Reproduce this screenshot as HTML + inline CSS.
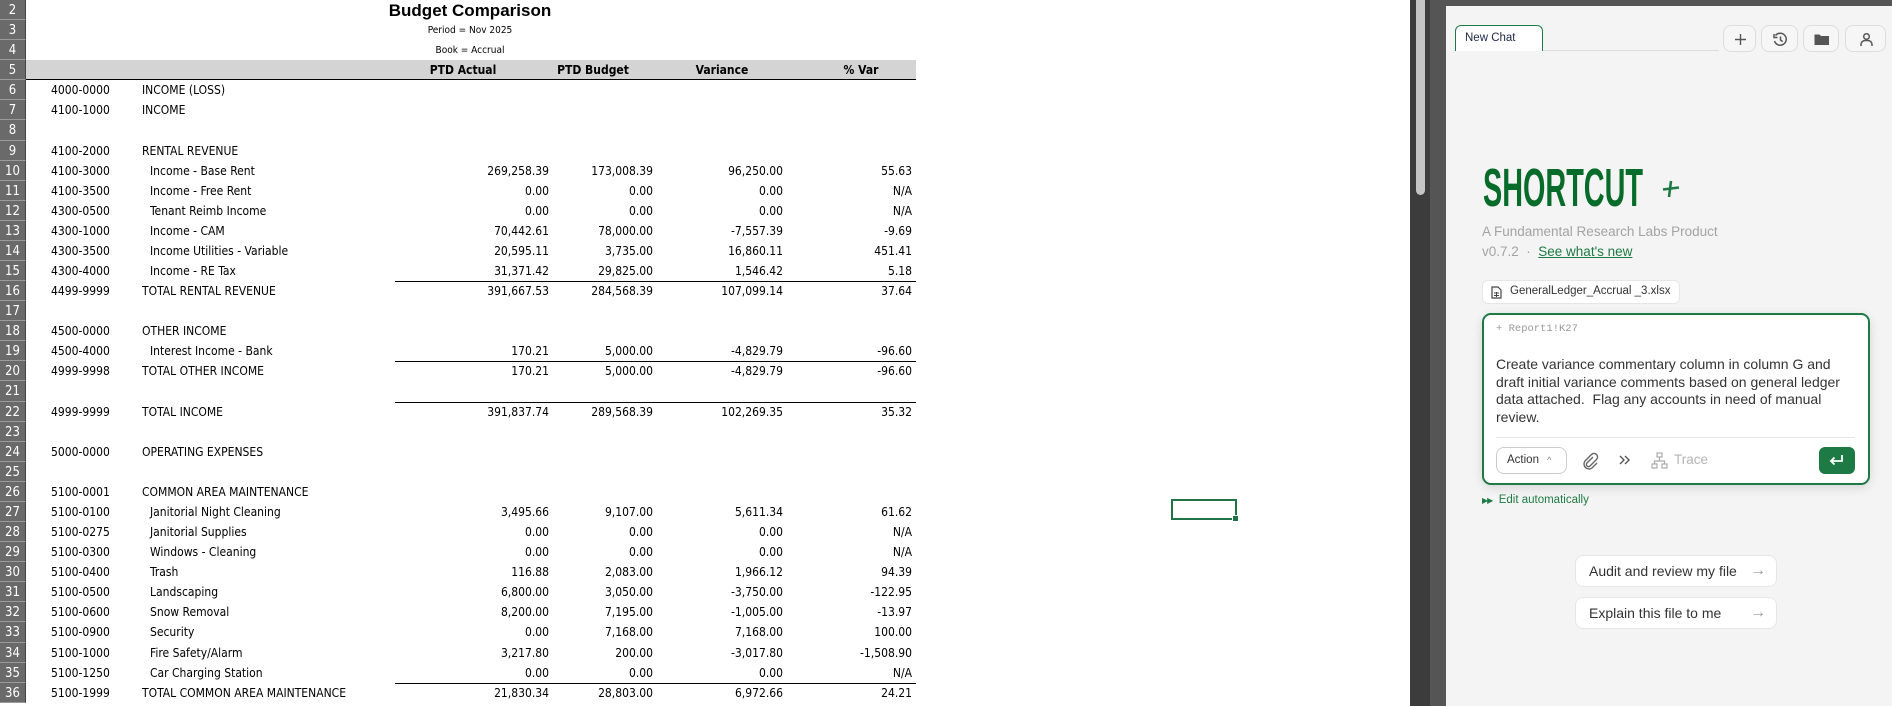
<!DOCTYPE html>
<html><head><meta charset="utf-8"><style>
*{margin:0;padding:0;box-sizing:border-box}
body{width:1892px;height:706px;overflow:hidden;background:#fff;font-family:"Liberation Sans",sans-serif;position:relative}
#sheet{position:absolute;left:0;top:0;width:1410px;height:706px;background:#fff;font-family:"DejaVu Sans Condensed","Liberation Sans",sans-serif;font-size:12px;color:#000}
.r{position:relative;height:20.08px;line-height:21px}
.r span{position:absolute;top:0;white-space:nowrap}
.h{left:0;width:26px;height:20.08px;background:#6a6a6a;color:#fff;text-align:center;font-size:13px;border-bottom:1px solid #9a9a9a;border-right:1px solid #444}
.c{left:51px}.n{left:142px}.ni{left:150px}
.a{left:449px;width:100px;text-align:right}
.b{left:553px;width:100px;text-align:right}
.v{left:683px;width:100px;text-align:right}
.p{left:812px;width:100px;text-align:right}
.tl::after{content:"";position:absolute;left:395px;width:521px;top:0;border-top:1px solid #000}
.ctr{left:300px;width:340px;text-align:center}
#sel{position:absolute;left:1171px;top:499px;width:66px;height:21px;border:2px solid #217346}
#sel::after{content:"";position:absolute;right:-4px;bottom:-4px;width:5px;height:5px;background:#217346;border:1px solid #fff}
#sb1{position:absolute;left:1410px;top:0;width:20px;height:706px;background:#3c3c3c}
#thumb{position:absolute;left:1416px;top:0;width:9px;height:195px;background:#c4c4c4;border-radius:0 0 5px 5px}
#sb2{position:absolute;left:1430px;top:0;width:16px;height:706px;background:#555}
#panel{position:absolute;left:1446px;top:0;width:446px;height:706px;background:#f4f4f4;border-top:6px solid #555}
.ab{position:absolute}
.btn{position:absolute;top:25px;height:27px;border:1px solid #ddd;border-radius:8px;background:#f6f6f6}
.sug{position:absolute;left:1575px;width:202px;height:32px;background:#fff;border:1px solid #e6e6e6;border-radius:8px;font-size:14px;color:#333;line-height:30px;padding-left:13px}
.sug i{position:absolute;right:10px;top:0;font-style:normal;color:#999;font-size:16px}
</style></head><body>
<div id="sheet">
<div class="r"><span class="h">2</span><span class="ctr" style="font-weight:bold;font-size:17px;font-family:'Liberation Sans',sans-serif">Budget Comparison</span></div>
<div class="r"><span class="h">3</span><span class="ctr" style="font-size:10px">Period = Nov 2025</span></div>
<div class="r"><span class="h">4</span><span class="ctr" style="font-size:10px">Book = Accrual</span></div>
<div class="r"><span class="h">5</span><span style="left:26px;width:890px;height:20.08px;background:#d4d4d4;border-bottom:1.5px solid #000"></span><span style="left:413px;width:100px;text-align:center;font-weight:bold">PTD Actual</span><span style="left:543px;width:100px;text-align:center;font-weight:bold">PTD Budget</span><span style="left:672px;width:100px;text-align:center;font-weight:bold">Variance</span><span style="left:811px;width:100px;text-align:center;font-weight:bold">% Var</span></div>
<div class="r"><span class="h">6</span><span class="c">4000-0000</span><span class="n">INCOME (LOSS)</span></div>
<div class="r"><span class="h">7</span><span class="c">4100-1000</span><span class="n">INCOME</span></div>
<div class="r"><span class="h">8</span></div>
<div class="r"><span class="h">9</span><span class="c">4100-2000</span><span class="n">RENTAL REVENUE</span></div>
<div class="r"><span class="h">10</span><span class="c">4100-3000</span><span class="ni">Income - Base Rent</span><span class="a">269,258.39</span><span class="b">173,008.39</span><span class="v">96,250.00</span><span class="p">55.63</span></div>
<div class="r"><span class="h">11</span><span class="c">4100-3500</span><span class="ni">Income - Free Rent</span><span class="a">0.00</span><span class="b">0.00</span><span class="v">0.00</span><span class="p">N/A</span></div>
<div class="r"><span class="h">12</span><span class="c">4300-0500</span><span class="ni">Tenant Reimb Income</span><span class="a">0.00</span><span class="b">0.00</span><span class="v">0.00</span><span class="p">N/A</span></div>
<div class="r"><span class="h">13</span><span class="c">4300-1000</span><span class="ni">Income - CAM</span><span class="a">70,442.61</span><span class="b">78,000.00</span><span class="v">-7,557.39</span><span class="p">-9.69</span></div>
<div class="r"><span class="h">14</span><span class="c">4300-3500</span><span class="ni">Income Utilities - Variable</span><span class="a">20,595.11</span><span class="b">3,735.00</span><span class="v">16,860.11</span><span class="p">451.41</span></div>
<div class="r"><span class="h">15</span><span class="c">4300-4000</span><span class="ni">Income - RE Tax</span><span class="a">31,371.42</span><span class="b">29,825.00</span><span class="v">1,546.42</span><span class="p">5.18</span></div>
<div class="r tl"><span class="h">16</span><span class="c">4499-9999</span><span class="n">TOTAL RENTAL REVENUE</span><span class="a">391,667.53</span><span class="b">284,568.39</span><span class="v">107,099.14</span><span class="p">37.64</span></div>
<div class="r"><span class="h">17</span></div>
<div class="r"><span class="h">18</span><span class="c">4500-0000</span><span class="n">OTHER INCOME</span></div>
<div class="r"><span class="h">19</span><span class="c">4500-4000</span><span class="ni">Interest Income - Bank</span><span class="a">170.21</span><span class="b">5,000.00</span><span class="v">-4,829.79</span><span class="p">-96.60</span></div>
<div class="r tl"><span class="h">20</span><span class="c">4999-9998</span><span class="n">TOTAL OTHER INCOME</span><span class="a">170.21</span><span class="b">5,000.00</span><span class="v">-4,829.79</span><span class="p">-96.60</span></div>
<div class="r"><span class="h">21</span></div>
<div class="r tl"><span class="h">22</span><span class="c">4999-9999</span><span class="n">TOTAL INCOME</span><span class="a">391,837.74</span><span class="b">289,568.39</span><span class="v">102,269.35</span><span class="p">35.32</span></div>
<div class="r"><span class="h">23</span></div>
<div class="r"><span class="h">24</span><span class="c">5000-0000</span><span class="n">OPERATING EXPENSES</span></div>
<div class="r"><span class="h">25</span></div>
<div class="r"><span class="h">26</span><span class="c">5100-0001</span><span class="n">COMMON AREA MAINTENANCE</span></div>
<div class="r"><span class="h">27</span><span class="c">5100-0100</span><span class="ni">Janitorial Night Cleaning</span><span class="a">3,495.66</span><span class="b">9,107.00</span><span class="v">5,611.34</span><span class="p">61.62</span></div>
<div class="r"><span class="h">28</span><span class="c">5100-0275</span><span class="ni">Janitorial Supplies</span><span class="a">0.00</span><span class="b">0.00</span><span class="v">0.00</span><span class="p">N/A</span></div>
<div class="r"><span class="h">29</span><span class="c">5100-0300</span><span class="ni">Windows - Cleaning</span><span class="a">0.00</span><span class="b">0.00</span><span class="v">0.00</span><span class="p">N/A</span></div>
<div class="r"><span class="h">30</span><span class="c">5100-0400</span><span class="ni">Trash</span><span class="a">116.88</span><span class="b">2,083.00</span><span class="v">1,966.12</span><span class="p">94.39</span></div>
<div class="r"><span class="h">31</span><span class="c">5100-0500</span><span class="ni">Landscaping</span><span class="a">6,800.00</span><span class="b">3,050.00</span><span class="v">-3,750.00</span><span class="p">-122.95</span></div>
<div class="r"><span class="h">32</span><span class="c">5100-0600</span><span class="ni">Snow Removal</span><span class="a">8,200.00</span><span class="b">7,195.00</span><span class="v">-1,005.00</span><span class="p">-13.97</span></div>
<div class="r"><span class="h">33</span><span class="c">5100-0900</span><span class="ni">Security</span><span class="a">0.00</span><span class="b">7,168.00</span><span class="v">7,168.00</span><span class="p">100.00</span></div>
<div class="r"><span class="h">34</span><span class="c">5100-1000</span><span class="ni">Fire Safety/Alarm</span><span class="a">3,217.80</span><span class="b">200.00</span><span class="v">-3,017.80</span><span class="p">-1,508.90</span></div>
<div class="r"><span class="h">35</span><span class="c">5100-1250</span><span class="ni">Car Charging Station</span><span class="a">0.00</span><span class="b">0.00</span><span class="v">0.00</span><span class="p">N/A</span></div>
<div class="r tl"><span class="h">36</span><span class="c">5100-1999</span><span class="n">TOTAL COMMON AREA MAINTENANCE</span><span class="a">21,830.34</span><span class="b">28,803.00</span><span class="v">6,972.66</span><span class="p">24.21</span></div>
<div id="sel"></div>
</div>
<div id="sb1"></div><div id="thumb"></div><div id="sb2"></div>
<div id="panel"></div>
<!-- tab -->
<div class="ab" style="left:1455px;top:25px;width:88px;height:26px;border:1.5px solid #1e7a45;border-bottom:none;border-radius:6px 6px 0 0;background:#fff;font-size:11.5px;color:#1f2a44;padding:6px 0 0 9px">New Chat</div>
<div class="ab" style="left:1543px;top:50px;width:176px;height:1px;background:#ddd"></div>
<div class="btn" style="left:1723px;width:33px"><svg width="33" height="27"><path d="M16.5 8v11M11 13.5h11" stroke="#555" stroke-width="1.4"/></svg></div>
<div class="btn" style="left:1761px;width:37px"><svg width="37" height="27"><path d="M13.5 9.5A6 6 0 1 1 12.5 15" fill="none" stroke="#555" stroke-width="1.5"/><path d="M12 8v3.5h3.5" fill="none" stroke="#555" stroke-width="1.5"/><path d="M18.5 10.5v3.5l2.2 1.6" fill="none" stroke="#555" stroke-width="1.5"/></svg></div>
<div class="btn" style="left:1803px;width:36px"><svg width="36" height="27"><path d="M10.5 8.5h5l1.5 1.5h8v9h-14.5z" fill="#555"/></svg></div>
<div class="btn" style="left:1845px;width:41px"><svg width="41" height="27"><circle cx="20.5" cy="10.5" r="2.8" fill="none" stroke="#555" stroke-width="1.5"/><path d="M15 20v-1.5a4 4 0 0 1 4-4h3a4 4 0 0 1 4 4V20" fill="none" stroke="#555" stroke-width="1.5"/></svg></div>
<!-- logo -->
<div class="ab" style="left:1483px;top:164px;font-family:'Liberation Sans',sans-serif;font-weight:bold;font-size:45px;color:#076b2a;transform:scale(0.64,1.2);transform-origin:left top;line-height:40px;white-space:nowrap">SHORTCUT</div>
<svg class="ab" style="left:1660px;top:178px" width="22" height="22"><path d="M11 3L9 19M3 11.5L19 9.5" stroke="#1e7a45" stroke-width="2.6"/></svg>
<div class="ab" style="left:1482px;top:224px;font-size:13.5px;color:#a3a3a3">A Fundamental Research Labs Product</div>
<div class="ab" style="left:1482px;top:244px;font-size:13.5px;color:#a3a3a3">v0.7.2 &nbsp;·&nbsp; <span style="color:#1e7a45;text-decoration:underline">See what's new</span></div>
<div class="ab" style="left:1482px;top:280px;width:198px;height:24px;background:#fff;border:1px solid #e6e6e6;border-radius:6px;font-size:11.5px;color:#333;padding:4px 0 0 27px">GeneralLedger_Accrual _3.xlsx</div>
<svg class="ab" style="left:1491px;top:286px" width="11" height="13"><path d="M1 1h6l3 3v8H1z" fill="none" stroke="#444" stroke-width="1.2"/><path d="M3 7h5M3 9.5h5M5.5 6v5" stroke="#444"/></svg>
<!-- input -->
<div class="ab" style="left:1482px;top:313px;width:388px;height:172px;background:#fff;border:2px solid #1e7a45;border-radius:9px;box-shadow:0 3px 10px rgba(0,0,0,.12)"></div>
<div class="ab" style="left:1496px;top:323px;font-family:'Liberation Mono',monospace;font-size:10.5px;color:#999">+ Report1!K27</div>
<div class="ab" style="left:1496px;top:356px;width:362px;font-size:14px;line-height:17.7px;color:#333">Create variance commentary column in column G and draft initial variance comments based on general ledger data attached.&nbsp; Flag any accounts in need of manual review.</div>
<div class="ab" style="left:1496px;top:437px;width:359px;height:1px;background:#e6e6e6"></div>
<div class="ab" style="left:1496px;top:447px;width:71px;height:27px;border:1px solid #ccc;border-radius:8px;font-size:11.5px;color:#333;padding:6px 0 0 10px">Action <span style="font-size:9px;color:#777;margin-left:5px">^</span></div>
<svg class="ab" style="left:1581px;top:452px" width="18" height="18"><path d="M12 5l-6 6a2 2 0 0 0 3 3l6.5-6.5a3.5 3.5 0 0 0-5-5L4 9a5 5 0 0 0 7 7l5-5" fill="none" stroke="#666" stroke-width="1.4"/></svg>
<svg class="ab" style="left:1618px;top:453px" width="14" height="14"><path d="M2 3l4 4-4 4M7 3l4 4-4 4" fill="none" stroke="#555" stroke-width="1.4"/></svg>
<svg class="ab" style="left:1651px;top:452px" width="17" height="18"><rect x="6" y="1" width="5" height="4" fill="none" stroke="#aaa" stroke-width="1.2"/><rect x="1" y="12" width="5" height="4" fill="none" stroke="#aaa" stroke-width="1.2"/><rect x="11" y="12" width="5" height="4" fill="none" stroke="#aaa" stroke-width="1.2"/><path d="M8.5 5v4M3.5 12V9h10v3" fill="none" stroke="#aaa" stroke-width="1.2"/></svg>
<div class="ab" style="left:1674px;top:452px;font-size:13.5px;color:#b5b5b5">Trace</div>
<div class="ab" style="left:1819px;top:447px;width:36px;height:27px;background:#1e7a45;border-radius:6px"><svg width="36" height="27"><path d="M23 8v6H12M15.5 10.5L12 14l3.5 3.5" fill="none" stroke="#fff" stroke-width="1.8"/></svg></div>
<div class="ab" style="left:1482px;top:494px;font-size:11.5px;color:#1e7a45"><span style="font-size:8px;letter-spacing:-1px">▶▶</span>&nbsp; Edit automatically</div>
<div class="sug" style="top:555px">Audit and review my file<i>→</i></div>
<div class="sug" style="top:597px">Explain this file to me<i>→</i></div>
</body></html>
